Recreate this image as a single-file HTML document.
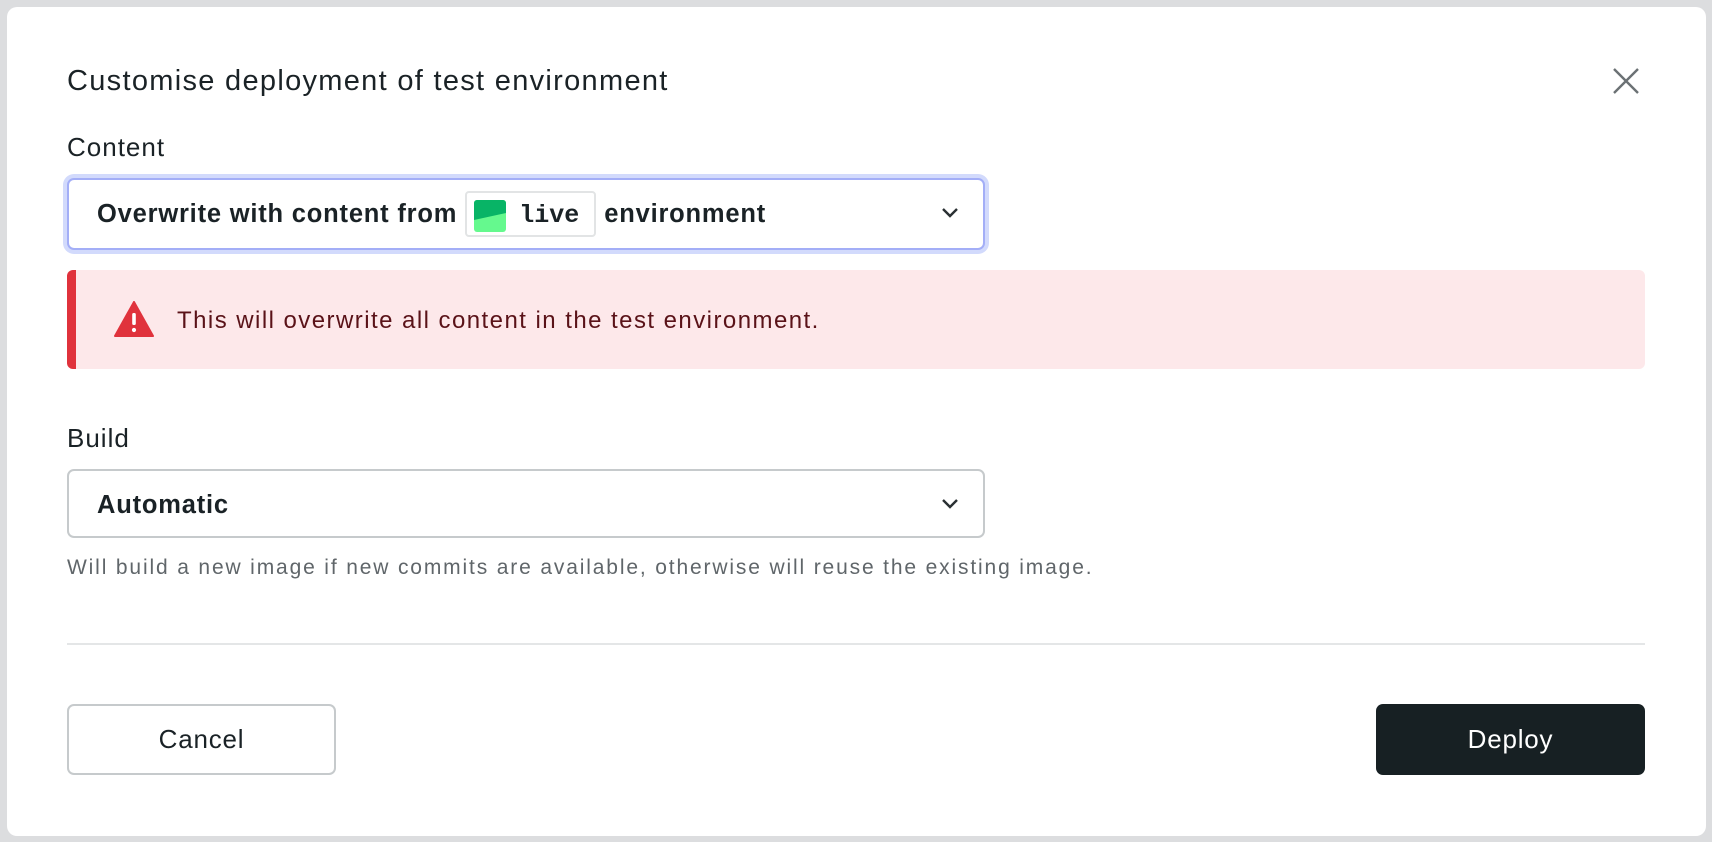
<!DOCTYPE html>
<html><head><meta charset="utf-8"><style>
*{box-sizing:border-box;margin:0;padding:0}
body{width:1712px;height:842px;background:#dcdddf;font-family:"Liberation Sans",sans-serif;color:#1a2226;position:relative;overflow:hidden}
.modal{position:absolute;left:7px;top:7px;width:1699px;height:829px;background:#fff;border-radius:10px}
.abs{position:absolute}
.title{left:67px;top:65px;font-size:29px;letter-spacing:1.3px}
.label{font-size:26px;letter-spacing:1px}
.sel{left:67px;width:918px;background:#fff;border-radius:7px;border:2px solid #c6cacc}
.sel1{top:178px;height:72px;border-color:#a3aef7;box-shadow:0 0 0 4px #d2dafc}
.row{position:absolute;left:28px;top:0;height:68px;display:flex;align-items:center;font-weight:bold;font-size:25.5px;letter-spacing:0.8px}
.chev{position:absolute;right:24px}
.badge{position:relative;margin:0 8px 0 8px;width:131px;height:46px;border:2px solid #e2e4e5;border-radius:4px;letter-spacing:0}
.alert{left:67px;top:270px;width:1578px;height:99px;background:#fde8ea;border-left:9px solid #e0323c;border-radius:6px}
.btn{top:704px;width:269px;height:71px;border-radius:7px;font-size:26px;letter-spacing:0.8px;display:flex;align-items:center;justify-content:center}
</style></head><body>
<div class="modal"></div>
<div class="abs title">Customise deployment of test environment</div>
<svg class="abs" style="left:1612px;top:67px" width="28" height="28" viewBox="0 0 28 28"><path d="M2 2L26 26M26 2L2 26" stroke="#6b7174" stroke-width="2.4"/></svg>
<div class="abs label" style="left:67px;top:132px">Content</div>
<div class="abs sel sel1">
 <div class="row">Overwrite with content from
 <div class="badge">
  <svg style="position:absolute;left:7px;top:7px" width="32" height="32" viewBox="0 0 32 32"><rect width="32" height="32" rx="3" fill="#65f98e"/><path d="M3 0H29a3 3 0 0 1 3 3V13L0 20V3a3 3 0 0 1 3-3z" fill="#08b466"/></svg>
  <span style="position:absolute;left:52px;top:8px;font-family:'Liberation Mono',monospace;font-weight:bold;font-size:25px">live</span>
 </div>environment</div>
 <svg class="chev" style="top:27px" width="18" height="12" viewBox="0 0 18 12"><path d="M2 2l7 7 7-7" fill="none" stroke="#2a3033" stroke-width="2.4"/></svg>
</div>
<div class="abs alert">
 <svg style="position:absolute;left:38px;top:31px" width="40" height="36" viewBox="0 0 40 36"><path d="M20 1L39 35H1z" fill="#e0323c" stroke="#e0323c" stroke-width="2" stroke-linejoin="round"/><rect x="18.2" y="12" width="3.6" height="12" rx="1.5" fill="#fff"/><circle cx="20" cy="29" r="2.1" fill="#fff"/></svg>
 <div style="position:absolute;left:101px;top:37px;font-size:24px;letter-spacing:1.45px;color:#5a1218">This will overwrite all content in the test environment.</div>
</div>
<div class="abs label" style="left:67px;top:423px">Build</div>
<div class="abs sel" style="top:469px;height:69px">
 <div class="row" style="height:68px">Automatic</div>
 <svg class="chev" style="top:27px" width="18" height="12" viewBox="0 0 18 12"><path d="M2 2l7 7 7-7" fill="none" stroke="#2a3033" stroke-width="2.4"/></svg>
</div>
<div class="abs" style="left:67px;top:556px;font-size:21px;letter-spacing:1.85px;color:#60666a">Will build a new image if new commits are available, otherwise will reuse the existing image.</div>
<div class="abs" style="left:67px;top:643px;width:1578px;height:2px;background:#e4e6e7"></div>
<div class="abs btn" style="left:67px;border:2px solid #c6cacc;background:#fff">Cancel</div>
<div class="abs btn" style="left:1376px;background:#172023;color:#fff">Deploy</div>
</body></html>
